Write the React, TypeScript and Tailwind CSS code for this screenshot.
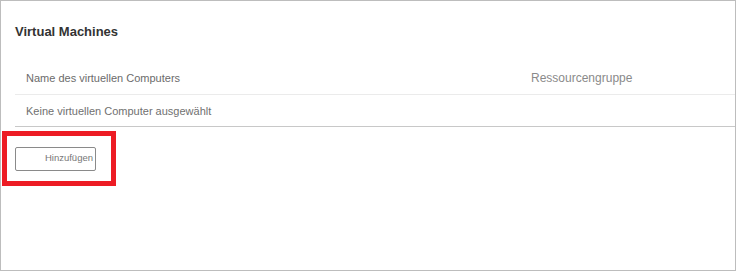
import React from "react";

export default function App() {
  return (
    <div className="w-[736px] h-[271px] border border-[#bdbdbd] bg-white font-['Liberation_Sans',Arial,sans-serif] overflow-hidden">
      <div className="pl-[14px] pt-[23px]">
        <h2 className="text-[13px] leading-[15px] font-bold text-[#333333]">Virtual Machines</h2>
        <div className="mt-[33px] flex border-b border-[#ebebeb] pb-[9px]">
          <div className="w-[516px] pl-[11px] text-[11px] leading-[13px] text-[#6b6b6b]">
            Name des virtuellen Computers
          </div>
          <div className="text-[12px] leading-[13px] text-[#8a8a8a]">Ressourcengruppe</div>
        </div>
        <div className="border-b border-[#c8c8c8] pt-[10px] pb-[8px] pl-[11px] text-[11px] leading-[13px] text-[#707070]">
          Keine virtuellen Computer ausgewählt
        </div>
      </div>
      <div className="mt-[4px] ml-[1px] w-[114px] h-[55px] border-[5px] border-[#ed1c24] pl-[8px] pt-[11px]">
        <button className="flex h-[24px] w-[81px] items-center justify-end rounded-[2px] border border-[#8a8a8a] bg-white pr-[2px] pb-[3px] text-[9.5px] leading-[12px] text-[#777777] font-['Liberation_Sans',Arial,sans-serif]">
          Hinzufügen
        </button>
      </div>
    </div>
  );
}
